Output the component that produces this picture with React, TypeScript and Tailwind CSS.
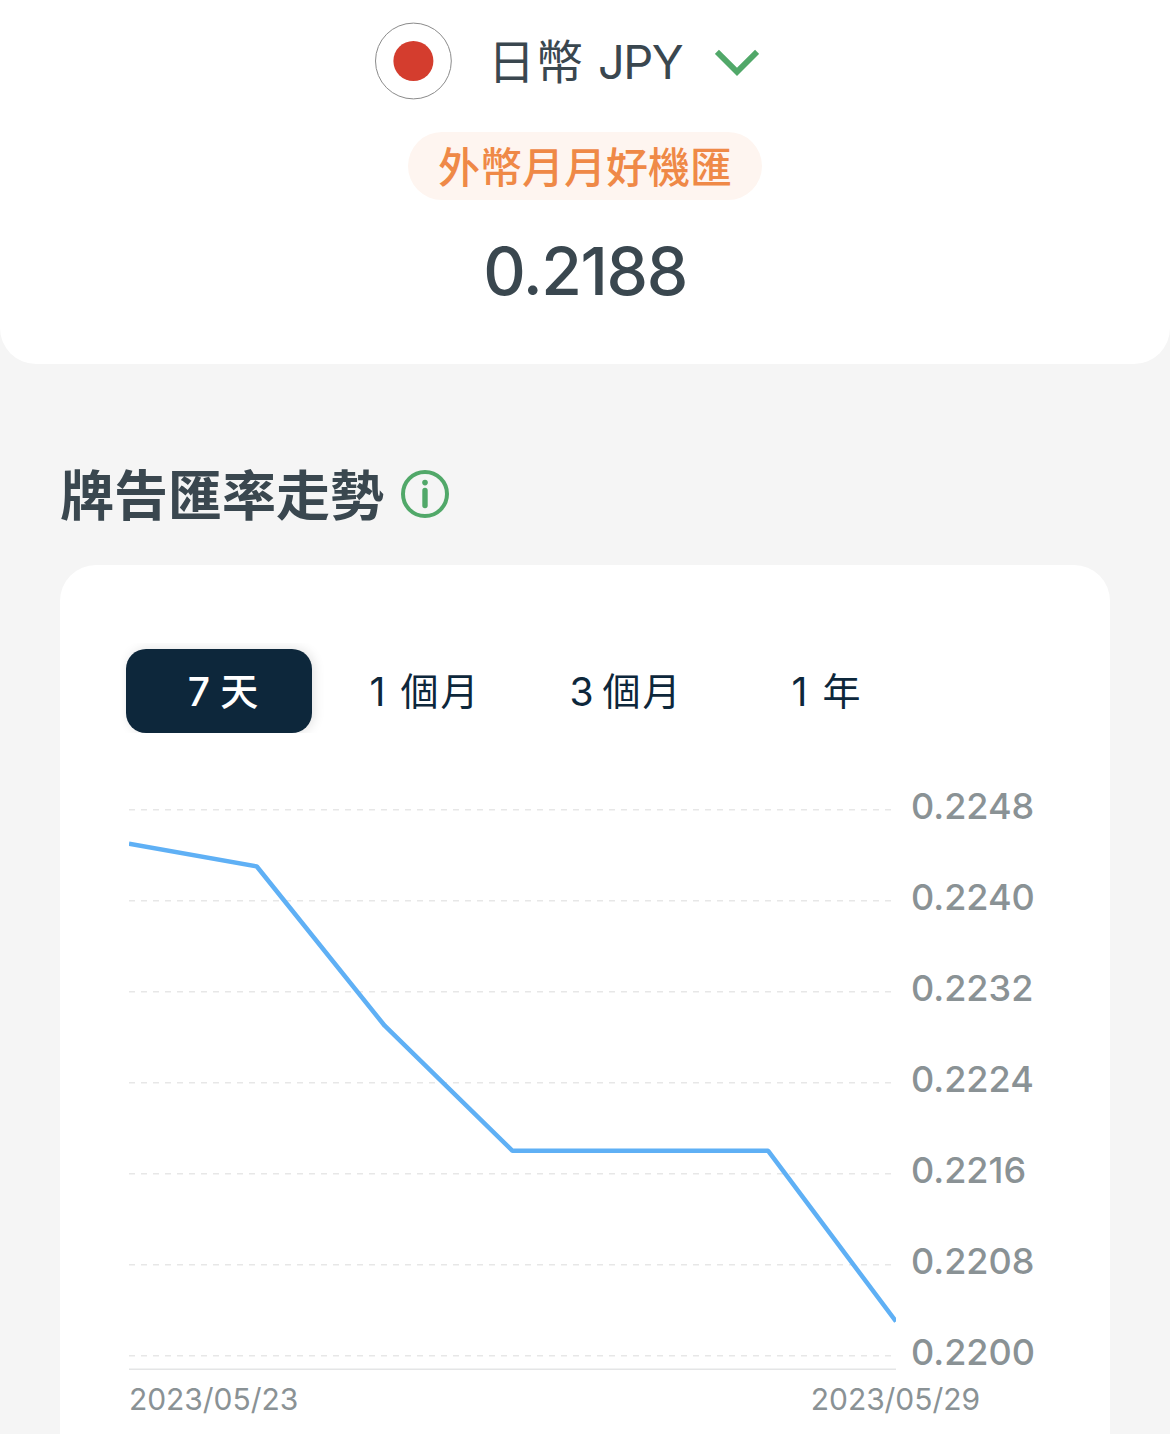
import { useState } from "react";

type Rate = {
  date: string;
  value: number;
};

const RATES: Rate[] = [
  { date: "2023/05/23", value: 0.2245 },
  { date: "2023/05/24", value: 0.2243 },
  { date: "2023/05/25", value: 0.2229 },
  { date: "2023/05/26", value: 0.2218 },
  { date: "2023/05/27", value: 0.2218 },
  { date: "2023/05/28", value: 0.2218 },
  { date: "2023/05/29", value: 0.2203 },
];

const TICKS = [0.2248, 0.224, 0.2232, 0.2224, 0.2216, 0.2208, 0.22];

const TABS = [
  { count: "7", unit: "天", gap: "gap-[10px]" },
  { count: "1", unit: "個月", gap: "gap-[15px]" },
  { count: "3", unit: "個月", gap: "gap-[9px]" },
  { count: "1", unit: "年", gap: "gap-[15px]" },
];

const CHART_WIDTH = 767;
const TICK_GAP = 91;

const toY = (value: number) =>
  20 + ((TICKS[0] - value) / (TICKS[0] - TICKS[1])) * TICK_GAP;

const FlagIcon = () => (
  <svg className="w-[78px] h-[78px]" viewBox="0 0 78 78">
    <circle cx="39.4" cy="39" r="37.9" fill="#fff" stroke="#8b8b8b" />
    <circle cx="39.4" cy="39" r="20" fill="#d43d2e" />
  </svg>
);

const ChevronIcon = () => (
  <svg className="w-11 h-7" viewBox="0 0 44 28" fill="none">
    <path d="M1.9 2.8 L22 22.8 L42.1 2.8" stroke="#51a869" strokeWidth="5.8" />
  </svg>
);

const InfoIcon = () => (
  <svg className="w-12 h-12" viewBox="0 0 48 48" fill="none">
    <circle cx="24" cy="24" r="22" stroke="#51a869" strokeWidth="4" />
    <circle cx="24" cy="12.6" r="2.8" fill="#51a869" />
    <path
      d="M24 20.5 V35.5"
      stroke="#51a869"
      strokeWidth="5.4"
      strokeLinecap="round"
    />
  </svg>
);

const RateChart = () => {
  const step = CHART_WIDTH / (RATES.length - 1);
  const points = RATES.map((r, i) => `${i * step},${toY(r.value) - 0.4}`).join(" ");

  return (
    <div className="ml-[69px] mt-[57px]">
      <div className="flex">
        <svg
          className="w-[767px] h-[582px] shrink-0"
          viewBox="0 0 767 582"
          fill="none"
        >
          {TICKS.map((tick) => (
            <line
              key={tick}
              x1="0"
              x2="762"
              y1={toY(tick) - 0.3}
              y2={toY(tick) - 0.3}
              stroke="#e7e7e7"
              strokeWidth="1.6"
              strokeDasharray="6 6"
            />
          ))}
          <line x1="0" x2="767" y1="579.2" y2="579.2" stroke="#e4e5e6" strokeWidth="1.6" />
          <polyline
            points={points}
            stroke="#5fb0f5"
            strokeWidth="4.5"
            strokeLinejoin="bevel"
          />
        </svg>
        <div className="ml-[15px] -mt-[29px] text-4xl font-medium text-[#8a9295]">
          {TICKS.map((tick) => (
            <div key={tick} className="h-[91px] leading-[91px]">
              {tick.toFixed(4)}
            </div>
          ))}
        </div>
      </div>
      <div className="-mt-[17px] flex w-[851px] justify-between text-3xl leading-9 tracking-[-0.05px] text-[#8a9295]">
        <span>{RATES[0].date}</span>
        <span>{RATES[RATES.length - 1].date}</span>
      </div>
    </div>
  );
};

const App = () => {
  const [active, setActive] = useState(0);

  return (
    <main className="h-[1434px] overflow-hidden bg-[#f5f5f5] font-[Inter,'Noto_Sans_CJK_TC',sans-serif] text-[#3a474f]">
      {/* Currency header */}
      <header className="flex h-[364px] flex-col items-center rounded-b-[36px] bg-white pt-[22px]">
        <button className="flex h-[78px] w-[422px] items-center">
          <FlagIcon />
          <span className="ml-[36px] flex w-[227px] items-center whitespace-nowrap text-[47px] leading-none">
            <span className="tracking-[1px]">日幣</span>
            <span className="ml-[14px] text-[47px] tracking-[-1.6px]">JPY</span>
          </span>
          <span className="pt-[3px]">
            <ChevronIcon />
          </span>
        </button>
        <div className="mt-8 flex h-[68px] w-[354px] items-center justify-center rounded-full bg-[#fef5f0] pt-[3px] text-[42px] font-medium leading-none text-[#ef8947]">
          外幣月月好機匯
        </div>
        <p className="mt-[38px] text-[66px] font-medium leading-[66px] tracking-[-1.4px]">
          0.2188
        </p>
      </header>

      {/* Trend section */}
      <section className="px-[60px] pt-[98px]">
        <h2 className="flex h-[64px] items-center text-[54px] font-bold leading-none">
          <span className="pt-[5px]">牌告匯率走勢</span>
          <span className="ml-[17px]">
            <InfoIcon />
          </span>
        </h2>
        <div className="mt-[39px] h-[920px] rounded-t-[36px] bg-white pt-[78px]">
          <div className="ml-[60px] flex h-[90px] w-[804px] overflow-hidden pt-[6px]">
            {TABS.map((tab, i) => (
              <button
                key={i}
                onClick={() => setActive(i)}
                className={`ml-1.5 mr-[9px] flex h-[84px] w-[186px] shrink-0 items-center justify-center whitespace-nowrap rounded-[20px] pl-2.5 text-[39px] leading-none ${tab.gap} ${
                  active === i
                    ? "bg-[#0d273b] font-medium text-white shadow-[2px_0_12px_rgba(0,0,0,0.12)]"
                    : "text-[#0d273b]"
                }`}
              >
                <span>{tab.count}</span>
                <span className="text-[38px] tracking-[2px]">{tab.unit}</span>
              </button>
            ))}
          </div>
          <RateChart />
        </div>
      </section>
    </main>
  );
};

export default App;
